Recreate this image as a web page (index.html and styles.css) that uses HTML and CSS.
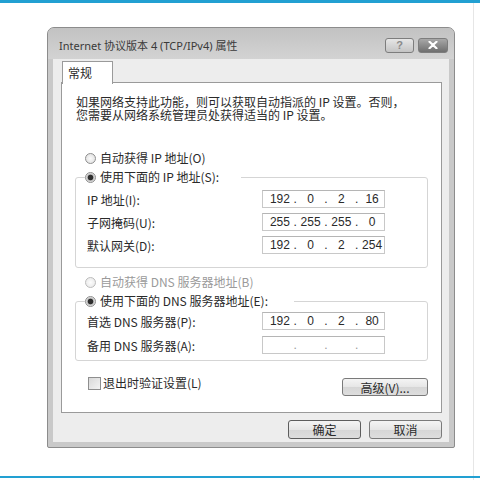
FILE: index.html
```html
<!DOCTYPE html>
<html lang="zh-CN">
<head>
  <meta charset="UTF-8" />
  <meta name="viewport" content="width=device-width, initial-scale=1.0"/>
  <title>Internet 协议版本 4 (TCP/IPv4) 属性</title>
  <link rel="stylesheet" href="styles.css">
</head>
<body>
  <div class="page">
    <div class="sheet">
      <div class="dialog">
        <div class="titlebar">
          <span class="title">Internet 协议版本 4 (TCP/IPv4) 属性</span>
          <div class="caption-buttons">
            <span class="cap help">?</span>
            <span class="cap close">
              <svg width="10" height="8" viewBox="0 0 10 8">
                <path d="M1.5 0.8 L8.5 7.2 M8.5 0.8 L1.5 7.2" stroke="#fff" stroke-width="2.2" stroke-linecap="round"/>
              </svg>
            </span>
          </div>
        </div>

        <div class="client">
          <div class="tabs"><span class="tab">常规</span></div>

          <div class="panel">
            <p class="desc">如果网络支持此功能，则可以获取自动指派的 IP 设置。否则，<br>您需要从网络系统管理员处获得适当的 IP 设置。</p>

            <div class="option first"><span class="radio"></span>自动获得 IP 地址(O)</div>
            <fieldset class="group ip-group">
              <legend class="option"><span class="radio on"></span>使用下面的 IP 地址(S):</legend>
              <div class="row">
                <span class="label">IP 地址(I):</span>
                <div class="ipbox"><span>192</span><i>.</i><span>0</span><i>.</i><span>2</span><i>.</i><span>16</span></div>
              </div>
              <div class="row">
                <span class="label">子网掩码(U):</span>
                <div class="ipbox"><span>255</span><i>.</i><span>255</span><i>.</i><span>255</span><i>.</i><span>0</span></div>
              </div>
              <div class="row">
                <span class="label">默认网关(D):</span>
                <div class="ipbox"><span>192</span><i>.</i><span>0</span><i>.</i><span>2</span><i>.</i><span>254</span></div>
              </div>
            </fieldset>

            <div class="option disabled dns-auto"><span class="radio"></span>自动获得 DNS 服务器地址(B)</div>
            <fieldset class="group dns-group">
              <legend class="option"><span class="radio on"></span>使用下面的 DNS 服务器地址(E):</legend>
              <div class="row">
                <span class="label">首选 DNS 服务器(P):</span>
                <div class="ipbox"><span>192</span><i>.</i><span>0</span><i>.</i><span>2</span><i>.</i><span>80</span></div>
              </div>
              <div class="row">
                <span class="label">备用 DNS 服务器(A):</span>
                <div class="ipbox empty"><span></span><i>.</i><span></span><i>.</i><span></span><i>.</i><span></span></div>
              </div>
            </fieldset>

            <div class="bottom-row">
              <div class="option check-option"><span class="checkbox"></span>退出时验证设置(L)</div>
              <button class="btn advanced">高级(V)...</button>
            </div>
          </div>

          <div class="actions">
            <button class="btn default">确定</button>
            <button class="btn">取消</button>
          </div>
        </div>
      </div>
      <div class="rule"></div>
    </div>
  </div>
</body>
</html>
```

FILE: styles.css
```css
body {
  margin: 0;
  background: #fff;
  font-family: "Noto Sans", "Noto Sans CJK SC", sans-serif;
  font-size: 12px;
  color: #2a2a2a;
}

.page {
  width: 480px;
  height: 480px;
  box-sizing: border-box;
  border-top: 3px solid #22a0d2;
}

.sheet {
  width: 474px;
  height: 477px;
  box-sizing: border-box;
  padding: 24px 0 0 47px;
  border-right: 1px solid #e6e6e6;
}

/* window frame */
.dialog {
  width: 408px;
  height: 421px;
  box-sizing: border-box;
  border: 1px solid #8c8c8c;
  border-radius: 7px 7px 2px 2px;
  background: #c9c9c9;
  padding: 0 5px 5px 5px;
  display: flex;
  flex-direction: column;
}

.titlebar {
  height: 31px;
  box-sizing: border-box;
  margin: 0 -5px;
  padding: 3px 6px 0 11px;
  display: flex;
  align-items: center;
  justify-content: space-between;
  background: linear-gradient(180deg, #c2c2c2, #d3d3d3);
  border-radius: 6px 6px 0 0;
}

.title {
  font-size: 11px;
  color: #3a3a3a;
}

.caption-buttons {
  display: flex;
  gap: 4px;
}

.cap {
  height: 15px;
  box-sizing: border-box;
  border: 1px solid #7d7d7d;
  border-radius: 3px;
  display: flex;
  align-items: center;
  justify-content: center;
}

.help {
  width: 29px;
  background: linear-gradient(180deg, #e6e6e6, #c4c4c4);
  color: #8a8a8a;
  font-family: "Liberation Sans", sans-serif;
  font-weight: bold;
  font-size: 11px;
}

.close {
  width: 30px;
  background: linear-gradient(180deg, #a8a8a8, #6f6f6f);
}

.client {
  flex: 1;
  background: #ededed;
  padding: 0 7px 0 8px;
}

.tabs {
  height: 24px;
  padding: 2px 0 0 1px;
  box-sizing: border-box;
  position: relative;
  z-index: 1;
}

.tab {
  display: inline-block;
  width: 51px;
  height: 23px;
  box-sizing: border-box;
  border: 1px solid #9a9a9a;
  border-bottom: none;
  background: #fff;
  padding: 3px 0 0 5px;
  line-height: 16px;
  font-family: "Noto Sans CJK SC", sans-serif;
}

.panel {
  height: 331px;
  box-sizing: border-box;
  margin-top: -1px;
  border: 1px solid #9a9a9a;
  background: #fff;
  padding: 12px 13px 0 13px;
  font-family: "Noto Sans CJK SC", sans-serif;
}

.desc {
  margin: 0 0 0 1px;
  line-height: 13px;
}

.option {
  display: flex;
  align-items: center;
  height: 16px;
  line-height: 16px;
  margin-left: 10px;
}

.option.first {
  margin-top: 29px;
}

.option.disabled {
  color: #9a9a9a;
}

.dns-auto {
  margin-top: 6px;
}

.radio {
  width: 11px;
  height: 11px;
  box-sizing: border-box;
  border: 1px solid #8e8e8e;
  border-radius: 50%;
  background: radial-gradient(circle, #fafafa 0, #dcdcdc 100%);
  margin-right: 4px;
}

.radio.on {
  background: radial-gradient(circle, #2e2e2e 0 2.4px, #bdbdbd 3.2px, #f2f2f2 5px);
}

.disabled .radio {
  border-color: #bcbcbc;
  background: radial-gradient(circle, #fdfdfd 0, #e6e6e6 100%);
}

.group {
  margin: 3px 0 0 0;
  border: 1px solid #d5d5d5;
  border-radius: 3px;
  padding: 0 11px 13px 11px;
  min-width: 0;
}

.group legend {
  padding: 0 22px 0 0;
  margin-left: -2px;
}

.ip-group {
  padding-top: 5px;
}

.dns-group {
  padding-top: 3px;
  padding-bottom: 6px;
}

.dns-group legend {
  padding-right: 26px;
}

.row {
  display: grid;
  grid-template-columns: 175px 123px;
  align-items: center;
  height: 18px;
}

.row + .row {
  margin-top: 5px;
}

.dns-group .row + .row {
  margin-top: 6px;
}

.ipbox {
  height: 18px;
  box-sizing: border-box;
  border: 1px solid #c8c8c8;
  border-top-color: #b5b5b5;
  display: flex;
  align-items: center;
  padding-left: 5px;
  font-family: "Liberation Sans", sans-serif;
  font-size: 12px;
}

.ipbox span {
  width: 24px;
  text-align: center;
}

.ipbox i {
  width: 7px;
  font-style: normal;
  text-align: center;
}

.ipbox.empty i {
  color: #999;
}

.bottom-row {
  display: flex;
  justify-content: space-between;
  align-items: flex-start;
  margin-top: 17px;
}

.check-option {
  margin-left: 13px;
  margin-top: -3px;
}

.checkbox {
  width: 13px;
  height: 13px;
  box-sizing: border-box;
  border: 1px solid #8e8e8e;
  background: linear-gradient(135deg, #d8d8d8, #f4f4f4);
  margin-right: 2px;
}

.btn {
  height: 19px;
  box-sizing: border-box;
  border: 1px solid #7a7a7a;
  border-radius: 3px;
  background: linear-gradient(180deg, #f4f4f4 0, #e6e6e6 50%, #d6d6d6 51%, #dedede 100%);
  font-family: "Noto Sans CJK SC", sans-serif;
  font-size: 12px;
  line-height: 15px;
  color: #2a2a2a;
  padding: 0;
  cursor: pointer;
}

.advanced {
  width: 86px;
  height: 18px;
}

.actions {
  display: flex;
  justify-content: flex-end;
  gap: 8px;
  margin-top: 7px;
}

.actions .btn {
  width: 73px;
}

.btn.default {
  border-color: #5d5d5d;
}

.rule {
  height: 2px;
  margin: 28px -47px 0 -47px;
  background: #22a0d2;
  width: 480px;
}
```
